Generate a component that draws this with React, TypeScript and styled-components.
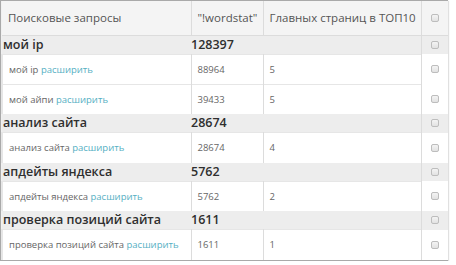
import React from "react";
import styled, { createGlobalStyle } from "styled-components";

const Global = createGlobalStyle`
  html, body { margin: 0; padding: 0; background: #fff; }
  body { font-family: "Open Sans", "Noto Sans", sans-serif; }
  *, *::before, *::after { box-sizing: border-box; }
`;

const Frame = styled.div`
  width: 448px;
  border: 1px solid #a9a9a9;
  box-shadow: 1px 1px 1px rgba(0,0,0,0.12);
  background: #f0f0f0;
`;

const Table = styled.table`
  width: 446px;
  border-collapse: collapse;
  table-layout: fixed;
`;

const Col = styled.col<{ $w: number }>`
  width: ${(p) => p.$w}px;
`;

const HeadCell = styled.th`
  height: 34px;
  padding: 0 6px;
  background: #f4f4f4;
  border-right: 1px solid #dcdcdc;
  border-bottom: 1px solid #dcdcdc;
  font-size: 11.5px;
  font-weight: 400;
  color: #555;
  text-align: left;
  white-space: nowrap;
  overflow: hidden;
  &:last-child { border-right: none; text-align: center; padding: 0; line-height: 0; }
`;

const GroupRow = styled.tr`
  background: #ededed;
`;

const GroupCell = styled.td`
  height: 18px;
  padding: 0 0 0 1px;
  font-size: 12.5px;
  font-weight: 600;
  color: #2f2f2f;
  white-space: nowrap;
  line-height: 18px;
`;

const GroupNum = styled(GroupCell)`
  padding-left: 0;
`;

const CheckCell = styled.td<{ $white?: boolean }>`
  text-align: center;
  border-left: 1px solid #dcdcdc;
  background: ${(p) => (p.$white ? "#fff" : "transparent")};
  padding: 0;
  line-height: 0;
`;

const DataRow = styled.tr`
  background: #fff;
`;

const DataCell = styled.td<{ $first?: boolean }>`
  height: 30px;
  padding: ${(p) => (p.$first ? "0 0 0 6px" : "0 6px")};
  border-right: 1px solid #dcdcdc;
  border-top: 1px solid #e6e6e6;
  font-size: 9.5px;
  color: #666;
  white-space: nowrap;
  ${(p) => (p.$first ? "border-left: 2px solid #e6e6e6;" : "")}
`;

const Link = styled.span`
  color: #55afc3;
`;

const Box = styled.span`
  display: inline-block;
  width: 8px;
  height: 8px;
  border: 1px solid #bdbdbd;
  border-radius: 2px;
  background: linear-gradient(#f4f4f4, #e2e2e2);
`;

type Item = { q: string; ws: string; top: string };
type Group = { name: string; total: string; items: Item[] };

const groups: Group[] = [
  {
    name: "мой ip",
    total: "128397",
    items: [
      { q: "мой ip", ws: "88964", top: "5" },
      { q: "мой айпи", ws: "39433", top: "5" },
    ],
  },
  { name: "анализ сайта", total: "28674", items: [{ q: "анализ сайта", ws: "28674", top: "4" }] },
  { name: "апдейты яндекса", total: "5762", items: [{ q: "апдейты яндекса", ws: "5762", top: "2" }] },
  {
    name: "проверка позиций сайта",
    total: "1611",
    items: [{ q: "проверка позиций сайта", ws: "1611", top: "1" }],
  },
];

export default function App() {
  return (
    <>
      <Global />
      <Frame>
        <Table>
          <colgroup>
            <Col $w={189} />
            <Col $w={72} />
            <Col $w={158} />
            <Col $w={27} />
          </colgroup>
          <thead>
            <tr>
              <HeadCell>Поисковые запросы</HeadCell>
              <HeadCell>"!wordstat"</HeadCell>
              <HeadCell>Главных страниц в ТОП10</HeadCell>
              <HeadCell>
                <Box />
              </HeadCell>
            </tr>
          </thead>
          <tbody>
            {groups.map((g) => (
              <React.Fragment key={g.name}>
                <GroupRow>
                  <GroupCell>{g.name}</GroupCell>
                  <GroupNum>{g.total}</GroupNum>
                  <GroupCell />
                  <CheckCell>
                    <Box />
                  </CheckCell>
                </GroupRow>
                {g.items.map((it) => (
                  <DataRow key={it.q}>
                    <DataCell $first>
                      {it.q} <Link>расширить</Link>
                    </DataCell>
                    <DataCell>{it.ws}</DataCell>
                    <DataCell>{it.top}</DataCell>
                    <CheckCell $white>
                      <Box />
                    </CheckCell>
                  </DataRow>
                ))}
              </React.Fragment>
            ))}
          </tbody>
        </Table>
      </Frame>
    </>
  );
}
